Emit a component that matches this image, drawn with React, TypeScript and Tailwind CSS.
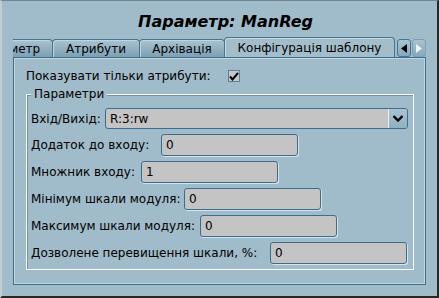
import React from "react";

const font = { fontFamily: '"DejaVu Sans", "Liberation Sans", sans-serif' };

function Tab({ label, selected, className = "" }: { label: string; selected?: boolean; className?: string }) {
  return (
    <div
      className={
        "shrink-0 flex items-center justify-center border border-b-0 border-[#45758f] rounded-t-[4px] text-[12px] text-black whitespace-nowrap " +
        (selected
          ? "h-[20px] bg-[#a3bdca] shadow-[inset_1px_1px_0_#c6d8e1]"
          : "h-[18px] bg-gradient-to-b from-[#a9c3d0] to-[#7d9fb3] shadow-[inset_1px_1px_0_#c2d5de]") +
        " " +
        className
      }
    >
      {label}
    </div>
  );
}

function Field({ label, value, labelW }: { label: string; value: string; labelW: number }) {
  return (
    <div className="flex items-center h-[22px]">
      <span className="text-[12px] text-black whitespace-nowrap shrink-0" style={{ width: labelW }}>
        {label}
      </span>
      <div className="w-[137px] h-[22px] bg-[#c4c4c4] border border-[#3b6d8d] rounded-[3px] shadow-[1px_1px_0_#d6e4ea] flex items-center pl-[4px] text-[12px] text-black">
        {value}
      </div>
    </div>
  );
}

export default function App() {
  return (
    <div
      className="w-[439px] h-[298px] bg-[#a0bbc9] border-t border-t-[#6f8794] border-l-2 border-l-[#c3cdd2] border-r-2 border-r-[#2c2521] border-b-2 border-b-[#2c2521] overflow-hidden"
      style={font}
    >
      <div className="h-[36px] flex items-center justify-center pl-[12px] pt-[5px]">
        <span className="text-[16px] font-bold italic text-black">Параметр: ManReg</span>
      </div>
      <div className="flex items-end h-[20px] ml-[11px] w-[413px]">
        <div className="flex items-end w-[383px] overflow-hidden">
          <Tab label="Параметр" className="w-[88px] -ml-[48px]" />
          <Tab label="Атрибути" className="w-[88px] -ml-[1px]" />
          <Tab label="Архівація" className="w-[86px] -ml-[1px]" />
          <Tab label="Конфігурація шаблону" selected className="w-[171px] -ml-[1px]" />
        </div>
        <div className="flex items-end ml-[1px] gap-[1px]">
          <div className="w-[14px] h-[18px] border border-[#45758f] rounded-[3px] bg-gradient-to-b from-[#a9c3d0] to-[#88a9bc] flex items-center justify-center">
            <svg width="6" height="9" viewBox="0 0 6 9">
              <polygon points="6,0 6,9 0,4.5" fill="#000" />
            </svg>
          </div>
          <div className="w-[14px] h-[18px] border border-[#7f9fb2] rounded-[3px] bg-gradient-to-b from-[#a9c3d0] to-[#88a9bc] flex items-center justify-center">
            <svg width="6" height="9" viewBox="0 0 6 9">
              <polygon points="0,0 0,9 6,4.5" fill="#eef3f5" />
            </svg>
          </div>
        </div>
      </div>
      <div className="ml-[11px] w-[413px] h-[228px] border border-[#3f6f8e] shadow-[inset_1px_1px_0_#c3d6df,inset_-1px_-1px_0_#c3d6df] px-[12px] pt-[11px]">
        <div className="flex items-center h-[14px]">
          <span className="w-[202px] shrink-0 text-[12px] text-black whitespace-nowrap">Показувати тільки атрибути:</span>
          <div className="w-[12px] h-[12px] bg-[#c6c6c6] border border-[#5d8199] flex items-center justify-center">
            <svg width="10" height="9" viewBox="0 0 10 9">
              <path d="M1 4.5 L3.5 7.5 L9 1" stroke="#000" strokeWidth="2" fill="none" />
            </svg>
          </div>
        </div>
        <div className="relative mt-[11px] w-[388px] h-[176px] border border-[#ffffff] shadow-[inset_1px_1px_0_#6f93a8] pl-[4px] pt-[13px]">
          <span className="absolute -top-[9px] left-[4px] px-[3px] bg-[#a0bbc9] text-[12px] text-black leading-[16px]">
            Параметри
          </span>
          <div className="flex flex-col gap-[5px]">
            <div className="flex items-center h-[21px]">
              <span className="w-[74px] shrink-0 text-[12px] text-black whitespace-nowrap">Вхід/Вихід:</span>
              <div className="w-[303px] h-[21px] bg-[#c4c4c4] border border-[#3b6d8d] rounded-[3px] flex items-center overflow-hidden">
                <span className="flex-1 pl-[4px] text-[12px] text-black">R:3:rw</span>
                <div className="w-[19px] h-full border-l border-l-[#e8eef1] bg-gradient-to-b from-[#a9c3d0] to-[#8fb0c2] flex items-center justify-center">
                  <svg width="10" height="7" viewBox="0 0 10 7">
                    <path d="M0.5 1 L5 5.5 L9.5 1" stroke="#000" strokeWidth="2.4" fill="none" />
                  </svg>
                </div>
              </div>
            </div>
            <Field label="Додаток до входу:" value="0" labelW={130} />
            <Field label="Множник входу:" value="1" labelW={110} />
            <Field label="Мінімум шкали модуля:" value="0" labelW={153} />
            <Field label="Максимум шкали модуля:" value="0" labelW={169} />
            <Field label="Дозволене перевищення шкали, %:" value="0" labelW={239} />
          </div>
        </div>
      </div>
    </div>
  );
}
